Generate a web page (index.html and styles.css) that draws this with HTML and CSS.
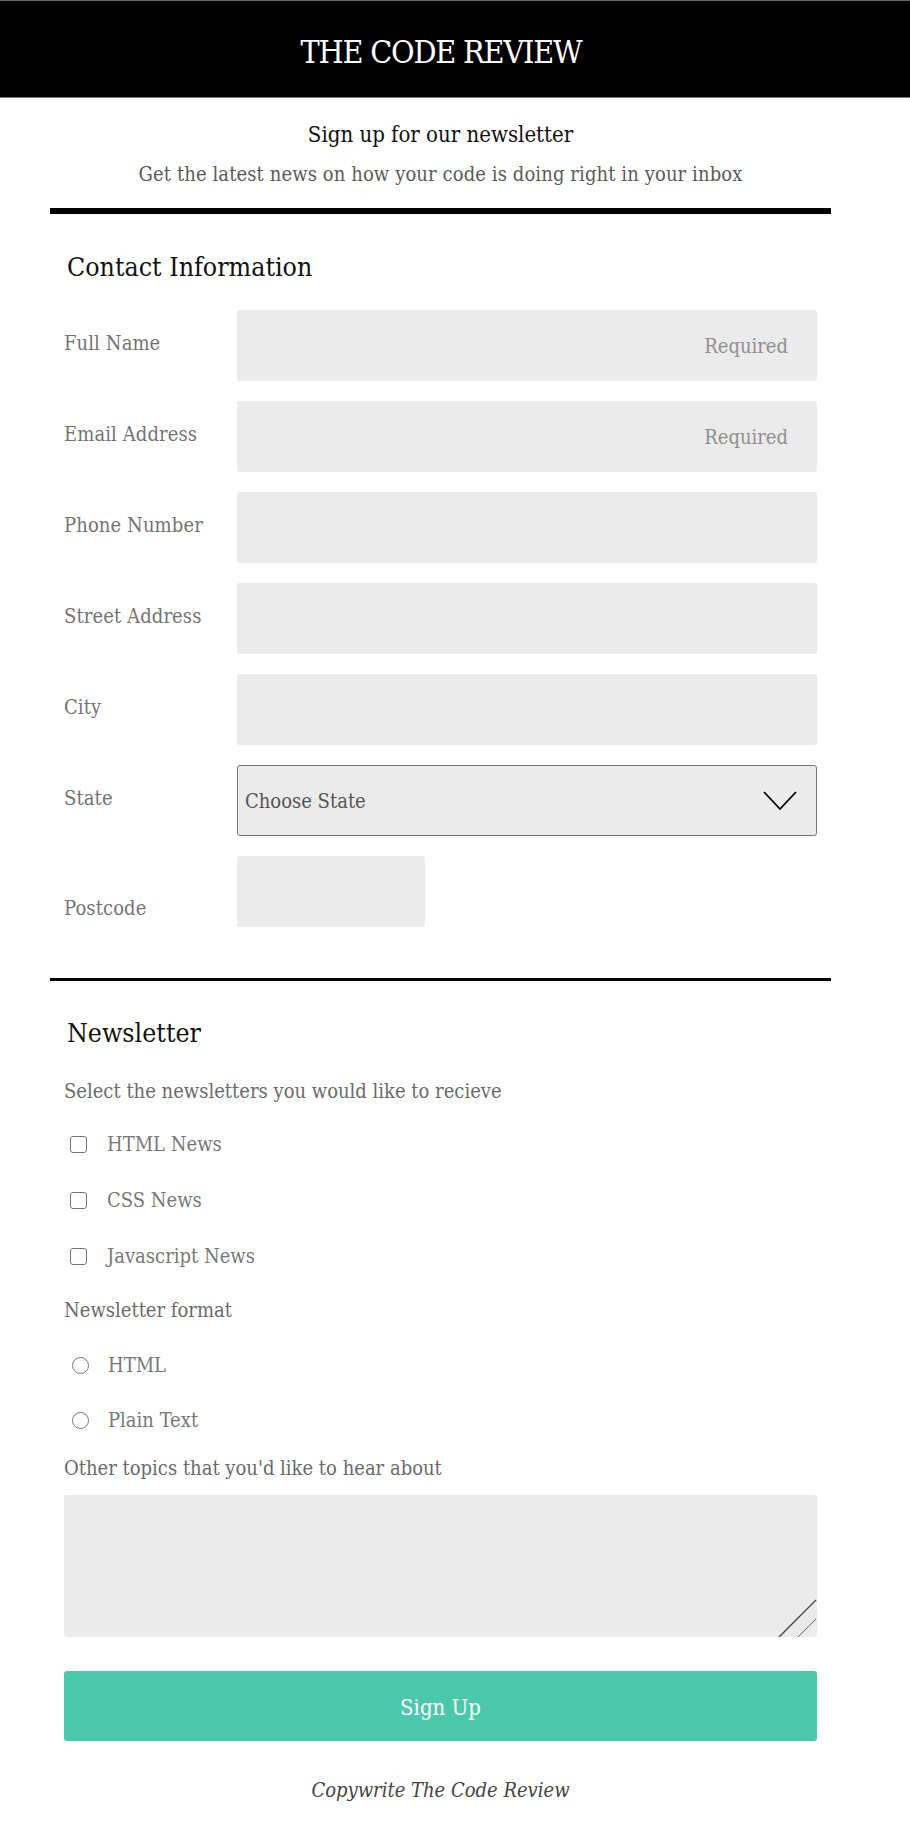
FILE: index.html
```html
<!DOCTYPE html>
<html lang="en">
<head>
<meta charset="utf-8">
<title>The Code Review</title>
<link rel="stylesheet" href="styles.css">
</head>
<body>
<header class="site-header">
  <div class="header-inner">
    <h1 class="site-title">THE CODE REVIEW</h1>
  </div>
</header>
<main class="page">
  <section class="intro">
    <h2 class="intro-title">Sign up for our newsletter</h2>
    <p class="intro-text">Get the latest news on how your code is doing right in your inbox</p>
  </section>
  <hr class="rule rule-thick">
  <form class="signup">
    <section class="section contact">
      <h3 class="section-title">Contact Information</h3>
      <div class="field">
        <label class="field-label" for="name">Full Name</label>
        <input class="field-input" id="name" type="text" placeholder="Required">
      </div>
      <div class="field">
        <label class="field-label" for="email">Email Address</label>
        <input class="field-input" id="email" type="email" placeholder="Required">
      </div>
      <div class="field">
        <label class="field-label" for="phone">Phone Number</label>
        <input class="field-input" id="phone" type="tel">
      </div>
      <div class="field">
        <label class="field-label" for="street">Street Address</label>
        <input class="field-input" id="street" type="text">
      </div>
      <div class="field">
        <label class="field-label" for="city">City</label>
        <input class="field-input" id="city" type="text">
      </div>
      <div class="field">
        <label class="field-label" for="state">State</label>
        <div class="select-wrap">
          <select class="field-select" id="state">
            <option>Choose State</option>
          </select>
          <svg class="select-arrow" width="34" height="20" viewBox="0 0 34 20" aria-hidden="true">
            <polyline points="1,1 17,18 33,1" fill="none" stroke="#000" stroke-width="1.8"/>
          </svg>
        </div>
      </div>
      <div class="field field-postcode">
        <label class="field-label" for="postcode">Postcode</label>
        <input class="field-input field-input-short" id="postcode" type="text">
      </div>
    </section>
    <hr class="rule rule-thin">
    <section class="section newsletter">
      <h3 class="section-title">Newsletter</h3>
      <p class="group-label">Select the newsletters you would like to recieve</p>
      <div class="options options-check">
        <label class="option"><input class="check" type="checkbox"><span>HTML News</span></label>
        <label class="option"><input class="check" type="checkbox"><span>CSS News</span></label>
        <label class="option"><input class="check" type="checkbox"><span>Javascript News</span></label>
      </div>
      <p class="group-label">Newsletter format</p>
      <div class="options options-radio">
        <label class="option"><input class="radio" type="radio" name="format"><span>HTML</span></label>
        <label class="option"><input class="radio" type="radio" name="format"><span>Plain Text</span></label>
      </div>
      <label class="group-label topics-label" for="topics">Other topics that you'd like to hear about</label>
      <div class="topics-wrap">
        <textarea class="topics" id="topics"></textarea>
        <svg class="grip" width="40" height="40" viewBox="0 0 40 40" aria-hidden="true">
          <line x1="2" y1="40" x2="39" y2="3" stroke="#555" stroke-width="1.6"/>
          <line x1="21" y1="40" x2="39" y2="22" stroke="#666" stroke-width="1"/>
        </svg>
      </div>
      <button class="submit" type="submit">Sign Up</button>
    </section>
  </form>
  <footer class="site-footer">Copywrite The Code Review</footer>
</main>
</body>
</html>
```

FILE: styles.css
```css
* {
  box-sizing: border-box;
}

body {
  margin: 0;
  background: #fff;
  font-family: "DejaVu Serif Condensed", "DejaVu Serif", serif;
  font-stretch: condensed;
  color: #111;
}

.site-header {
  background: #000;
  height: 98px;
  border-top: 1px solid #666;
  border-bottom: 1px solid #777;
}

.header-inner {
  width: 882px;
  height: 100%;
  display: flex;
  align-items: center;
  justify-content: center;
  padding-top: 6px;
}

.site-title {
  margin: 0;
  color: #fff;
  font-weight: normal;
  font-size: 32px;
  line-height: 40px;
  letter-spacing: -1.2px;
}

.page {
  width: 781px;
  margin-left: 50px;
}

.intro {
  text-align: center;
  padding-top: 22px;
}

.intro-title {
  margin: 0;
  font-weight: normal;
  font-size: 22px;
  line-height: 30px;
  color: #111;
}

.intro-text {
  margin: 10px 0 0;
  font-size: 20px;
  line-height: 28px;
  letter-spacing: 0.1px;
  color: #5a5a5a;
}

.rule {
  border: 0;
  margin: 0;
  background: #000;
}

.rule-thick {
  height: 6px;
  margin-top: 20px;
}

.rule-thin {
  height: 3px;
  margin-top: 51px;
}

.section {
  padding: 0 14px;
}

.section-title {
  margin: 36px 0 0 3px;
  font-weight: normal;
  font-size: 26.5px;
  line-height: 34px;
  color: #111;
}

.contact .section-title {
  margin-bottom: 26px;
}

.field {
  display: flex;
  align-items: center;
  margin-bottom: 20px;
}

.field:last-child {
  margin-bottom: 0;
}

.field-label {
  width: 173px;
  flex: none;
  padding-bottom: 5px;
  font-size: 20px;
  line-height: 24px;
  letter-spacing: 0.1px;
  color: #737373;
}

.field-input {
  width: 580px;
  height: 71px;
  border: 0;
  border-radius: 3px;
  background: #eaebea;
  padding: 0 29px 0 8px;
  text-align: right;
  font-family: inherit;
  font-stretch: condensed;
  font-size: 20px;
  color: #333;
}

.field-input::placeholder {
  color: #8f8f8f;
}

.field-input-short {
  width: 188px;
}

.field-postcode {
  align-items: flex-end;
}

.field-postcode .field-label {
  padding-bottom: 0;
  margin-bottom: 7px;
}

.select-wrap {
  position: relative;
  width: 580px;
  height: 71px;
}

.field-select {
  width: 100%;
  height: 100%;
  appearance: none;
  -webkit-appearance: none;
  border: 1px solid #767676;
  border-radius: 3px;
  background: #eaebea;
  padding: 0 0 0 7px;
  font-family: inherit;
  font-stretch: condensed;
  font-size: 20px;
  color: #555;
}

.select-arrow {
  position: absolute;
  right: 20px;
  top: 26px;
  pointer-events: none;
}

.group-label {
  display: block;
  margin: 0;
  font-size: 20px;
  line-height: 28px;
  color: #6a6a6a;
}

.newsletter .section-title {
  margin-top: 35px;
  margin-bottom: 27px;
}

.options {
  display: flex;
  flex-direction: column;
}

.options-check {
  gap: 28px;
  margin: 25px 0 26px;
}

.options-radio {
  gap: 27px;
  margin: 27px 0 20px;
}

.option {
  display: flex;
  align-items: center;
  height: 28px;
  padding-left: 6px;
  font-size: 20px;
  color: #777;
}

.check {
  appearance: none;
  -webkit-appearance: none;
  width: 17px;
  height: 17px;
  margin: 0 20px 0 0;
  border: 1.5px solid #767676;
  border-radius: 3px;
  background: #fff;
}

.radio {
  appearance: none;
  -webkit-appearance: none;
  width: 17px;
  height: 17px;
  margin: 0 19px 0 2px;
  border: 1.5px solid #767676;
  border-radius: 50%;
  background: #fff;
}

.topics-wrap {
  position: relative;
  margin-top: 13px;
}

.topics {
  display: block;
  width: 753px;
  height: 142px;
  border: 0;
  border-radius: 3px;
  background: #eaebea;
  font-family: inherit;
  resize: none;
}

.grip {
  position: absolute;
  right: 0;
  bottom: 0;
  pointer-events: none;
}

.submit {
  display: block;
  width: 753px;
  height: 70px;
  margin-top: 34px;
  border: 0;
  border-radius: 3px;
  background: #4bc8aa;
  color: #fff;
  font-family: inherit;
  font-stretch: condensed;
  font-size: 22px;
  padding-top: 3px;
}

.site-footer {
  margin-top: 35px;
  text-align: center;
  font-style: italic;
  font-size: 20px;
  line-height: 28px;
  color: #444;
}
```
